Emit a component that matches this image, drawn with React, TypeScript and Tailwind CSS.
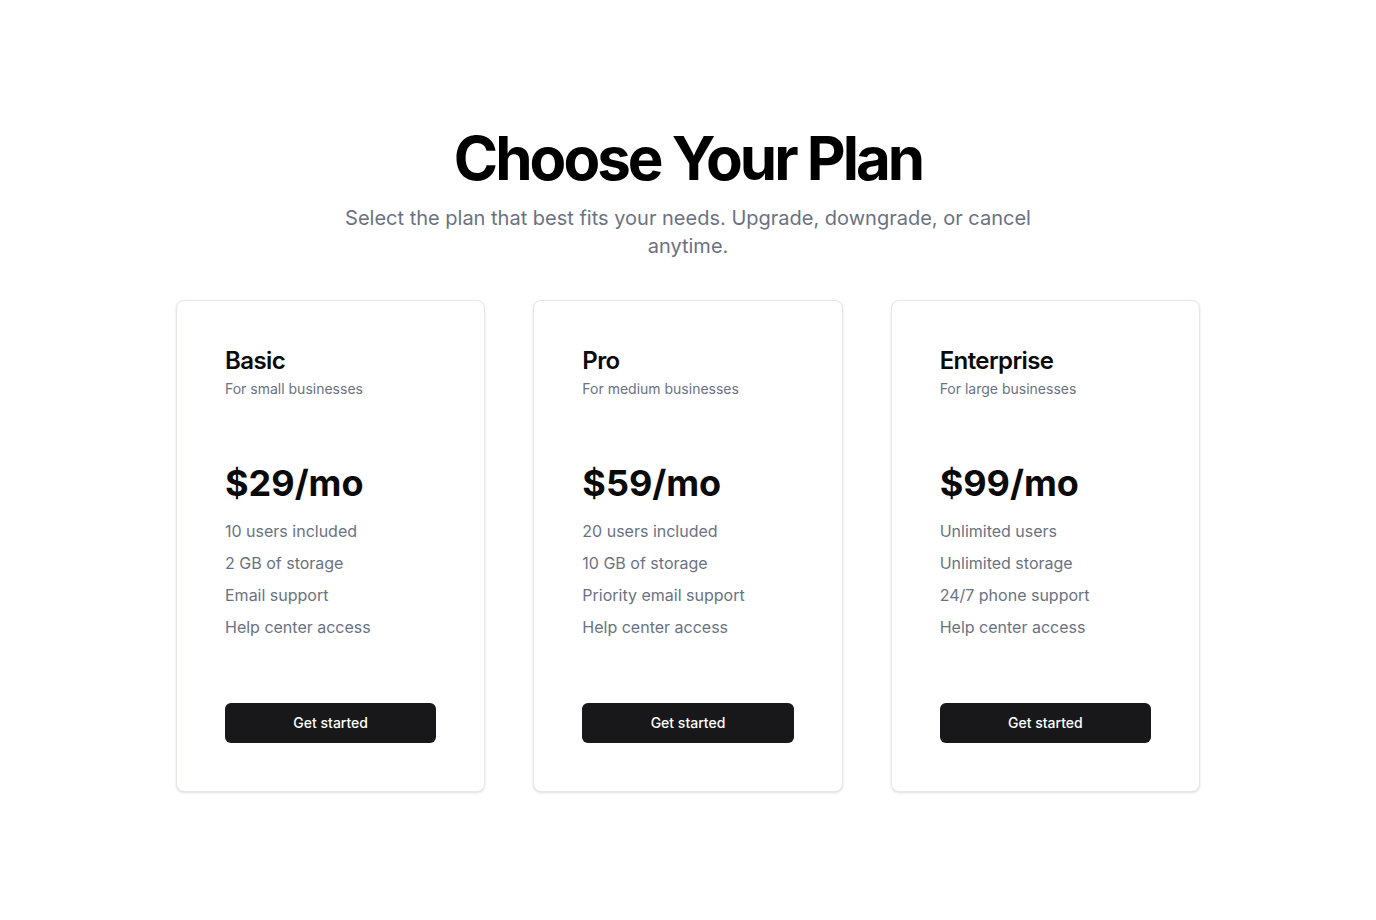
import React from 'react';

const plans = [
  {
    name: 'Basic',
    desc: 'For small businesses',
    price: '$29/mo',
    features: ['10 users included', '2 GB of storage', 'Email support', 'Help center access'],
  },
  {
    name: 'Pro',
    desc: 'For medium businesses',
    price: '$59/mo',
    features: ['20 users included', '10 GB of storage', 'Priority email support', 'Help center access'],
  },
  {
    name: 'Enterprise',
    desc: 'For large businesses',
    price: '$99/mo',
    features: ['Unlimited users', 'Unlimited storage', '24/7 phone support', 'Help center access'],
  },
];

export default function App() {
  return (
    <section className="min-h-screen bg-white pt-32 font-['Inter',sans-serif]">
      <div className="max-w-5xl mx-auto">
        <div className="text-center">
          <h1 className="text-6xl leading-none font-bold tracking-tighter text-black">Choose Your Plan</h1>
          <p className="mt-4 mx-auto max-w-[720px] text-xl text-gray-500">
            Select the plan that best fits your needs. Upgrade, downgrade, or cancel anytime.
          </p>
        </div>

        <div className="mt-10 grid grid-cols-3 gap-12">
          {plans.map((plan) => (
            <div key={plan.name} className="rounded-lg border border-gray-200 bg-white p-12 shadow-sm">
              <h3 className="text-2xl leading-none font-semibold tracking-tight text-neutral-950">{plan.name}</h3>
              <p className="mt-1.5 text-sm text-gray-500">{plan.desc}</p>
              <div className="mt-16 text-4xl font-bold text-neutral-950">{plan.price}</div>
              <ul className="mt-4 space-y-2 text-base text-gray-500">
                {plan.features.map((f) => (
                  <li key={f}>{f}</li>
                ))}
              </ul>
              <button className="mt-16 h-10 w-full rounded-md bg-zinc-900 text-sm font-medium text-white">
                Get started
              </button>
            </div>
          ))}
        </div>
      </div>
    </section>
  );
}
